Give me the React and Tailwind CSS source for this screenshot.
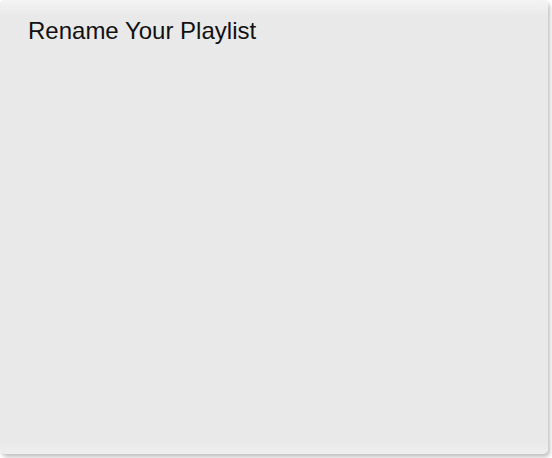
import React from 'react';

const App = () => {
  return (
    <div className="w-[552px] h-[458px] bg-white" style={{ fontFamily: '"Liberation Sans", Arial, sans-serif' }}>
      {/* Dialog panel */}
      <div className="w-[548px] h-[454px] rounded-[5px] bg-[#e9e9e9] shadow-[2px_3px_4px_rgba(0,0,0,0.25)] flex flex-col overflow-hidden">
        <div className="h-[16px] bg-gradient-to-b from-[#f4f4f4] to-[#e9e9e9] shrink-0" />
        <h1 className="px-[28px] text-[24px] leading-[30px] text-[#111] font-normal">
          Rename Your Playlist
        </h1>
        <div className="flex-1" />
        <div className="h-[12px] bg-gradient-to-b from-[#e9e9e9] to-[#efefef] shrink-0" />
      </div>
    </div>
  );
};

export default App;
